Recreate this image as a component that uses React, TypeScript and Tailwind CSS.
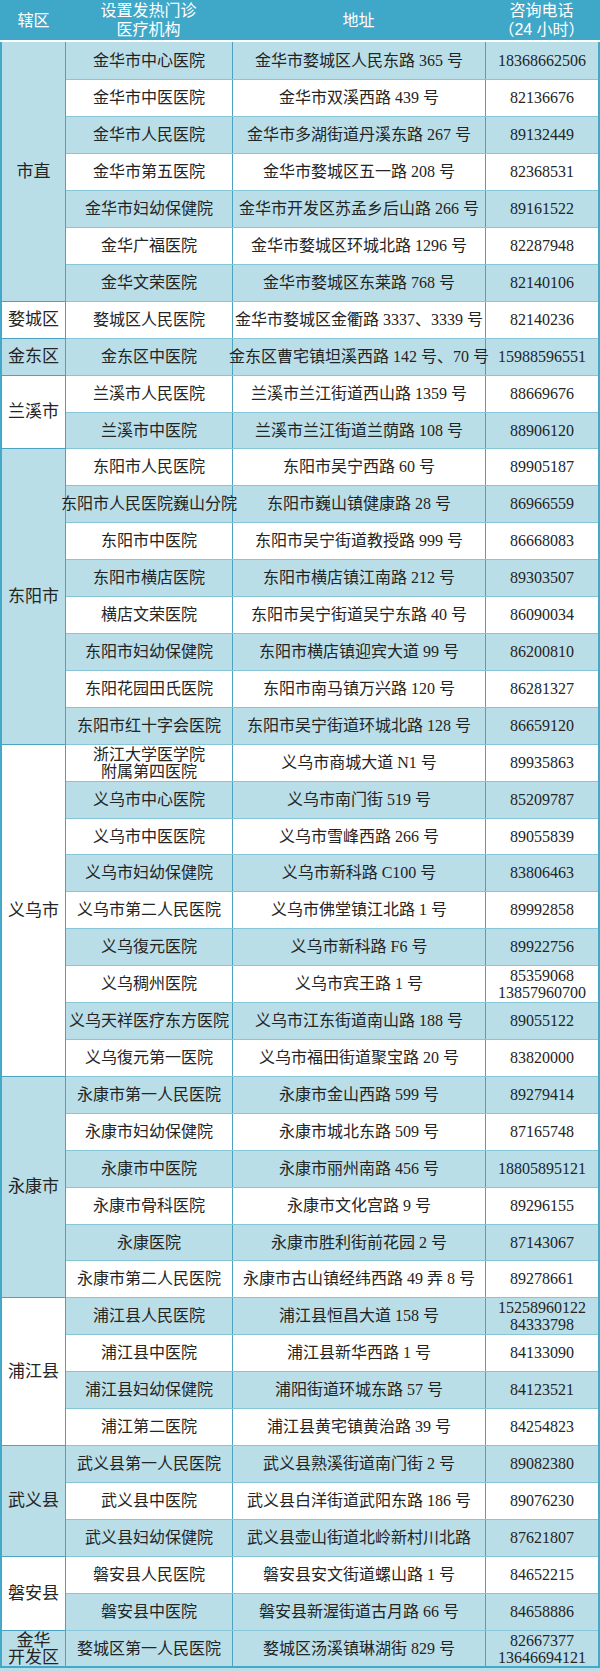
import React from 'react';

type Row = [string, string, string];

interface Group {
    district: string;
    rows: Row[];
}

// 辖区 -> 发热门诊列表
const groups: Group[] = [
    {
        district: '市直',
        rows: [
            ['金华市中心医院', '金华市婺城区人民东路 365 号', '18368662506'],
            ['金华市中医医院', '金华市双溪西路 439 号', '82136676'],
            ['金华市人民医院', '金华市多湖街道丹溪东路 267 号', '89132449'],
            ['金华市第五医院', '金华市婺城区五一路 208 号', '82368531'],
            ['金华市妇幼保健院', '金华市开发区苏孟乡后山路 266 号', '89161522'],
            ['金华广福医院', '金华市婺城区环城北路 1296 号', '82287948'],
            ['金华文荣医院', '金华市婺城区东莱路 768 号', '82140106'],
        ],
    },
    {
        district: '婺城区',
        rows: [['婺城区人民医院', '金华市婺城区金衢路 3337、3339 号', '82140236']],
    },
    {
        district: '金东区',
        rows: [['金东区中医院', '金东区曹宅镇坦溪西路 142 号、70 号', '15988596551']],
    },
    {
        district: '兰溪市',
        rows: [
            ['兰溪市人民医院', '兰溪市兰江街道西山路 1359 号', '88669676'],
            ['兰溪市中医院', '兰溪市兰江街道兰荫路 108 号', '88906120'],
        ],
    },
    {
        district: '东阳市',
        rows: [
            ['东阳市人民医院', '东阳市吴宁西路 60 号', '89905187'],
            ['东阳市人民医院巍山分院', '东阳市巍山镇健康路 28 号', '86966559'],
            ['东阳市中医院', '东阳市吴宁街道教授路 999 号', '86668083'],
            ['东阳市横店医院', '东阳市横店镇江南路 212 号', '89303507'],
            ['横店文荣医院', '东阳市吴宁街道吴宁东路 40 号', '86090034'],
            ['东阳市妇幼保健院', '东阳市横店镇迎宾大道 99 号', '86200810'],
            ['东阳花园田氏医院', '东阳市南马镇万兴路 120 号', '86281327'],
            ['东阳市红十字会医院', '东阳市吴宁街道环城北路 128 号', '86659120'],
        ],
    },
    {
        district: '义乌市',
        rows: [
            ['浙江大学医学院\n附属第四医院', '义乌市商城大道 N1 号', '89935863'],
            ['义乌市中心医院', '义乌市南门街 519 号', '85209787'],
            ['义乌市中医医院', '义乌市雪峰西路 266 号', '89055839'],
            ['义乌市妇幼保健院', '义乌市新科路 C100 号', '83806463'],
            ['义乌市第二人民医院', '义乌市佛堂镇江北路 1 号', '89992858'],
            ['义乌復元医院', '义乌市新科路 F6 号', '89922756'],
            ['义乌稠州医院', '义乌市宾王路 1 号', '85359068\n13857960700'],
            ['义乌天祥医疗东方医院', '义乌市江东街道南山路 188 号', '89055122'],
            ['义乌復元第一医院', '义乌市福田街道聚宝路 20 号', '83820000'],
        ],
    },
    {
        district: '永康市',
        rows: [
            ['永康市第一人民医院', '永康市金山西路 599 号', '89279414'],
            ['永康市妇幼保健院', '永康市城北东路 509 号', '87165748'],
            ['永康市中医院', '永康市丽州南路 456 号', '18805895121'],
            ['永康市骨科医院', '永康市文化宫路 9 号', '89296155'],
            ['永康医院', '永康市胜利街前花园 2 号', '87143067'],
            ['永康市第二人民医院', '永康市古山镇经纬西路 49 弄 8 号', '89278661'],
        ],
    },
    {
        district: '浦江县',
        rows: [
            ['浦江县人民医院', '浦江县恒昌大道 158 号', '15258960122\n84333798'],
            ['浦江县中医院', '浦江县新华西路 1 号', '84133090'],
            ['浦江县妇幼保健院', '浦阳街道环城东路 57 号', '84123521'],
            ['浦江第二医院', '浦江县黄宅镇黄治路 39 号', '84254823'],
        ],
    },
    {
        district: '武义县',
        rows: [
            ['武义县第一人民医院', '武义县熟溪街道南门街 2 号', '89082380'],
            ['武义县中医院', '武义县白洋街道武阳东路 186 号', '89076230'],
            ['武义县妇幼保健院', '武义县壶山街道北岭新村川北路', '87621807'],
        ],
    },
    {
        district: '磐安县',
        rows: [
            ['磐安县人民医院', '磐安县安文街道螺山路 1 号', '84652215'],
            ['磐安县中医院', '磐安县新渥街道古月路 66 号', '84658886'],
        ],
    },
    {
        district: '金华\n开发区',
        rows: [['婺城区第一人民医院', '婺城区汤溪镇琳湖街 829 号', '82667377\n13646694121']],
    },
];

const TOTAL_ROWS = groups.reduce((n, g) => n + g.rows.length, 0);

const BLUE = 'bg-[#badee8]';

// multi-line cell text, tighter leading so the row keeps its height
const Lines: React.FC<{text: string}> = ({text}) => {
    const parts = text.split('\n');
    const lh = parts.length > 1 ? 'leading-[17px]' : 'leading-[20px]';
    return (
        <>
            {parts.map((line, i) => (
                <span key={i} className={`block ${lh}`}>{line}</span>
            ))}
        </>
    );
};

const Cell: React.FC<{text: string; last?: boolean}> = ({text, last}) => (
    <div
        className={`flex flex-col items-center justify-center text-center whitespace-nowrap ${last ? '' : 'border-r border-[#4ba3bf]'}`}
    >
        <Lines text={text}/>
    </div>
);

const App: React.FC = () => {
    let rowIndex = 0;

    return (
        <div className="w-[600px] bg-[#badee8]">
            <div
                className="bg-white border-x-2 border-b-2 border-[#44a8c8]"
                style={{fontFamily: '"Liberation Serif", "Noto Sans CJK SC", serif'}}
            >
                {/* header */}
                <div
                    className="grid grid-cols-[65px_167px_253px_1fr] h-[42px] bg-[#3fa7c8] border-b-2 border-white text-white text-[16px] leading-[19px] text-center -mx-[2px]"
                    style={{fontFamily: '"Liberation Sans", "Noto Sans CJK SC", sans-serif'}}
                >
                    <div className="flex items-center justify-center pl-[2px]">辖区</div>
                    <div className="flex flex-col items-center justify-center">
                        <span>设置发热门诊</span>
                        <span>医疗机构</span>
                    </div>
                    <div className="flex items-center justify-center">地址</div>
                    <div className="flex flex-col items-center justify-center pr-[2px]">
                        <span>咨询电话</span>
                        <span>（24 小时）</span>
                    </div>
                </div>

                {/* body */}
                <div className="text-[16px] text-[#242424]">
                    {groups.map((group, gi) => (
                        <div key={group.district} className="flex">
                            <div
                                className={`w-[64px] shrink-0 flex flex-col items-center justify-center text-[17px] border-r border-[#4ba3bf] ${gi > 0 ? 'border-t' : ''} ${gi % 2 === 0 ? BLUE : 'bg-white'}`}
                            >
                                <Lines text={group.district}/>
                            </div>
                            <div className="flex-1">
                                {group.rows.map((row, ri) => {
                                    const idx = rowIndex++;
                                    const blue = idx % 2 === 0 || idx === TOTAL_ROWS - 1;
                                    // the source image rows average ~36.9px
                                    const h = idx % 11 === 10 ? 'h-[36px]' : 'h-[37px]';
                                    return (
                                        <div
                                            key={ri}
                                            className={`grid grid-cols-[167px_253px_1fr] ${h} ${idx > 0 ? 'border-t border-[#86c6d8]' : ''} ${blue ? BLUE : 'bg-white'}`}
                                        >
                                            <Cell text={row[0]}/>
                                            <Cell text={row[1]}/>
                                            <Cell text={row[2]} last/>
                                        </div>
                                    );
                                })}
                            </div>
                        </div>
                    ))}
                </div>
            </div>
            <div className="h-[3px]"/>
        </div>
    );
};

export default App;
